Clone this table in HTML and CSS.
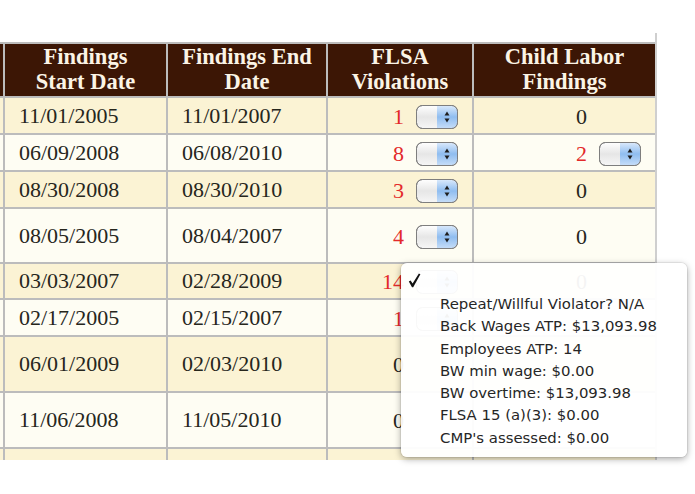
FILE: index.html
```html
<!DOCTYPE html>
<html>
<head>
<meta charset="utf-8">
<link rel="stylesheet" href="styles.css">
</head>
<body>
<div class="page">
<div class="frame">
  <table class="grid">
    <colgroup>
      <col class="c0"><col class="c1"><col class="c2"><col class="c3"><col class="c4">
    </colgroup>
    <thead>
      <tr class="h">
        <th></th>
        <th>Findings<br>Start Date</th>
        <th>Findings End<br>Date</th>
        <th>FLSA<br>Violations</th>
        <th>Child Labor<br>Findings</th>
      </tr>
    </thead>
    <tbody>
      <tr class="odd r37">
        <td></td><td>11/01/2005</td><td>11/01/2007</td>
        <td class="num"><span class="red">1</span><svg class="stepper" width="42" height="24" viewBox="0 0 42 24"><defs><linearGradient id="gl" x1="0" y1="0" x2="0" y2="1"><stop offset="0" stop-color="#ffffff"/><stop offset="0.5" stop-color="#e6e6e6"/><stop offset="1" stop-color="#f6f6f6"/></linearGradient><linearGradient id="gr" x1="0" y1="0" x2="0" y2="1"><stop offset="0" stop-color="#d8e8fb"/><stop offset="0.5" stop-color="#8fbdf0"/><stop offset="1" stop-color="#c4dcf8"/></linearGradient></defs><rect x="0.5" y="0.5" width="41" height="23" rx="6" fill="url(#gl)" stroke="#7e7e7e"/><path d="M21 1 H35.5 A5.5 5.5 0 0 1 41 6.5 V17.5 A5.5 5.5 0 0 1 35.5 23 H21 Z" fill="url(#gr)"/><rect x="0.5" y="0.5" width="41" height="23" rx="6" fill="none" stroke="#7e7e7e"/><polygon points="28.5,10.5 33.5,10.5 31,6.5" fill="#1e1e1e"/><polygon points="28.5,13.5 33.5,13.5 31,17.5" fill="#1e1e1e"/></svg></td>
        <td class="num"><span>0</span><svg class="stepper ghost" width="42" height="24"></svg></td>
      </tr>
      <tr class="even r37">
        <td></td><td>06/09/2008</td><td>06/08/2010</td>
        <td class="num"><span class="red">8</span><svg class="stepper" width="42" height="24" viewBox="0 0 42 24"><rect x="0.5" y="0.5" width="41" height="23" rx="6" fill="url(#gl)" stroke="#7e7e7e"/><path d="M21 1 H35.5 A5.5 5.5 0 0 1 41 6.5 V17.5 A5.5 5.5 0 0 1 35.5 23 H21 Z" fill="url(#gr)"/><rect x="0.5" y="0.5" width="41" height="23" rx="6" fill="none" stroke="#7e7e7e"/><polygon points="28.5,10.5 33.5,10.5 31,6.5" fill="#1e1e1e"/><polygon points="28.5,13.5 33.5,13.5 31,17.5" fill="#1e1e1e"/></svg></td>
        <td class="num"><span class="red">2</span><svg class="stepper" width="42" height="24" viewBox="0 0 42 24"><rect x="0.5" y="0.5" width="41" height="23" rx="6" fill="url(#gl)" stroke="#7e7e7e"/><path d="M21 1 H35.5 A5.5 5.5 0 0 1 41 6.5 V17.5 A5.5 5.5 0 0 1 35.5 23 H21 Z" fill="url(#gr)"/><rect x="0.5" y="0.5" width="41" height="23" rx="6" fill="none" stroke="#7e7e7e"/><polygon points="28.5,10.5 33.5,10.5 31,6.5" fill="#1e1e1e"/><polygon points="28.5,13.5 33.5,13.5 31,17.5" fill="#1e1e1e"/></svg></td>
      </tr>
      <tr class="odd r37">
        <td></td><td>08/30/2008</td><td>08/30/2010</td>
        <td class="num"><span class="red">3</span><svg class="stepper" width="42" height="24" viewBox="0 0 42 24"><rect x="0.5" y="0.5" width="41" height="23" rx="6" fill="url(#gl)" stroke="#7e7e7e"/><path d="M21 1 H35.5 A5.5 5.5 0 0 1 41 6.5 V17.5 A5.5 5.5 0 0 1 35.5 23 H21 Z" fill="url(#gr)"/><rect x="0.5" y="0.5" width="41" height="23" rx="6" fill="none" stroke="#7e7e7e"/><polygon points="28.5,10.5 33.5,10.5 31,6.5" fill="#1e1e1e"/><polygon points="28.5,13.5 33.5,13.5 31,17.5" fill="#1e1e1e"/></svg></td>
        <td class="num"><span>0</span><svg class="stepper ghost" width="42" height="24"></svg></td>
      </tr>
      <tr class="even r55">
        <td></td><td>08/05/2005</td><td>08/04/2007</td>
        <td class="num"><span class="red">4</span><svg class="stepper" width="42" height="24" viewBox="0 0 42 24"><rect x="0.5" y="0.5" width="41" height="23" rx="6" fill="url(#gl)" stroke="#7e7e7e"/><path d="M21 1 H35.5 A5.5 5.5 0 0 1 41 6.5 V17.5 A5.5 5.5 0 0 1 35.5 23 H21 Z" fill="url(#gr)"/><rect x="0.5" y="0.5" width="41" height="23" rx="6" fill="none" stroke="#7e7e7e"/><polygon points="28.5,10.5 33.5,10.5 31,6.5" fill="#1e1e1e"/><polygon points="28.5,13.5 33.5,13.5 31,17.5" fill="#1e1e1e"/></svg></td>
        <td class="num"><span>0</span><svg class="stepper ghost" width="42" height="24"></svg></td>
      </tr>
      <tr class="odd r36">
        <td></td><td>03/03/2007</td><td>02/28/2009</td>
        <td class="num"><span class="red">14</span><svg class="stepper" width="42" height="24" viewBox="0 0 42 24"><rect x="0.5" y="0.5" width="41" height="23" rx="6" fill="url(#gl)" stroke="#7e7e7e"/><path d="M21 1 H35.5 A5.5 5.5 0 0 1 41 6.5 V17.5 A5.5 5.5 0 0 1 35.5 23 H21 Z" fill="url(#gr)"/><rect x="0.5" y="0.5" width="41" height="23" rx="6" fill="none" stroke="#7e7e7e"/><polygon points="28.5,10.5 33.5,10.5 31,6.5" fill="#1e1e1e"/><polygon points="28.5,13.5 33.5,13.5 31,17.5" fill="#1e1e1e"/></svg></td>
        <td class="num"><span>0</span><svg class="stepper ghost" width="42" height="24"></svg></td>
      </tr>
      <tr class="even r37">
        <td></td><td>02/17/2005</td><td>02/15/2007</td>
        <td class="num"><span class="red">1</span><svg class="stepper" width="42" height="24" viewBox="0 0 42 24"><rect x="0.5" y="0.5" width="41" height="23" rx="6" fill="url(#gl)" stroke="#7e7e7e"/><path d="M21 1 H35.5 A5.5 5.5 0 0 1 41 6.5 V17.5 A5.5 5.5 0 0 1 35.5 23 H21 Z" fill="url(#gr)"/><rect x="0.5" y="0.5" width="41" height="23" rx="6" fill="none" stroke="#7e7e7e"/><polygon points="28.5,10.5 33.5,10.5 31,6.5" fill="#1e1e1e"/><polygon points="28.5,13.5 33.5,13.5 31,17.5" fill="#1e1e1e"/></svg></td>
        <td class="num"></td>
      </tr>
      <tr class="odd r56">
        <td></td><td>06/01/2009</td><td>02/03/2010</td>
        <td class="num"><span>0</span><svg class="stepper ghost" width="42" height="24"></svg></td>
        <td class="num"></td>
      </tr>
      <tr class="even r56">
        <td></td><td>11/06/2008</td><td>11/05/2010</td>
        <td class="num"><span>0</span><svg class="stepper ghost" width="42" height="24"></svg></td>
        <td class="num"></td>
      </tr>
      <tr class="odd r56">
        <td></td><td></td><td></td><td></td><td></td>
      </tr>
    </tbody>
  </table>
</div>

<div class="menu">
  <div class="check"><svg width="13" height="15" viewBox="0 0 13 15"><path d="M0.8 8.6 L2.6 7.4 L4.6 10.6 L10.9 0.6 L12.4 1.2 L5.2 14.2 L4.0 14.2 Z" fill="#111111"/></svg></div>
  <ul class="items">
    <li>Repeat/Willful Violator? N/A</li>
    <li>Back Wages ATP: $13,093.98</li>
    <li>Employees ATP: 14</li>
    <li>BW min wage: $0.00</li>
    <li>BW overtime: $13,093.98</li>
    <li>FLSA 15 (a)(3): $0.00</li>
    <li>CMP's assessed: $0.00</li>
  </ul>
</div>
</div>
</body>
</html>
```

FILE: styles.css
```css
html, body {
  margin: 0;
  padding: 0;
  background: #ffffff;
}

.page {
  position: relative;
  width: 695px;
  height: 494px;
  overflow: hidden;
}

.frame {
  margin-top: 33px;
  width: 655px;
  height: 427px;
  overflow: hidden;
  border-right: 2px solid #cfcfcf;
}

.grid {
  margin-top: 9px;
  margin-left: -60px;
  width: 715px;
  table-layout: fixed;
  border-collapse: separate;
  border-spacing: 0;
  font-family: "Liberation Serif", "Times New Roman", serif;
  font-size: 22px;
  color: #26261c;
}

.c0 { width: 63px; }
.c1 { width: 163px; }
.c2 { width: 160px; }
.c3 { width: 146px; }
.c4 { width: 183px; }

.grid th,
.grid td {
  box-sizing: border-box;
  border-left: 2px solid #bcbcbc;
  border-top: 2px solid #bcbcbc;
  padding: 0 14px;
  vertical-align: middle;
  white-space: nowrap;
}

.grid th {
  background: #3c1605;
  color: #fbf4e6;
  font-weight: bold;
  font-size: 22.5px;
  line-height: 25px;
  height: 54px;
  text-align: center;
  padding: 0 4px 2px;
}

.odd td { background: #fbf3d4; }
.even td { background: #fefdf3; }

.r36 td { height: 36px; }
.r37 td { height: 37px; }
.r55 td { height: 55px; }
.r56 td { height: 56px; }

.grid td.num {
  text-align: right;
  padding-right: 14px;
}

.num span {
  display: inline-block;
  vertical-align: middle;
  line-height: 24px;
}

.red { color: #e32a2a; }

.stepper {
  display: inline-block;
  vertical-align: middle;
  margin-left: 12px;
}

.ghost { visibility: hidden; }

.menu {
  position: absolute;
  left: 401px;
  top: 263px;
  width: 286px;
  height: 194px;
  box-sizing: border-box;
  padding-top: 5px;
  background: rgba(255, 255, 255, 0.95);
  border-radius: 6px;
  box-shadow: 0 2px 7px rgba(0, 0, 0, 0.35), 0 0 0 1px rgba(0, 0, 0, 0.06);
  font-family: "DejaVu Sans", Verdana, sans-serif;
  color: #262626;
}

.check {
  display: flex;
  align-items: center;
  height: 24px;
  padding-left: 7px;
}

.items {
  list-style: none;
  margin: 1px 0 0 0;
  padding: 0 0 0 39px;
  font-size: 14.9px;
  line-height: 22.3px;
}
```
